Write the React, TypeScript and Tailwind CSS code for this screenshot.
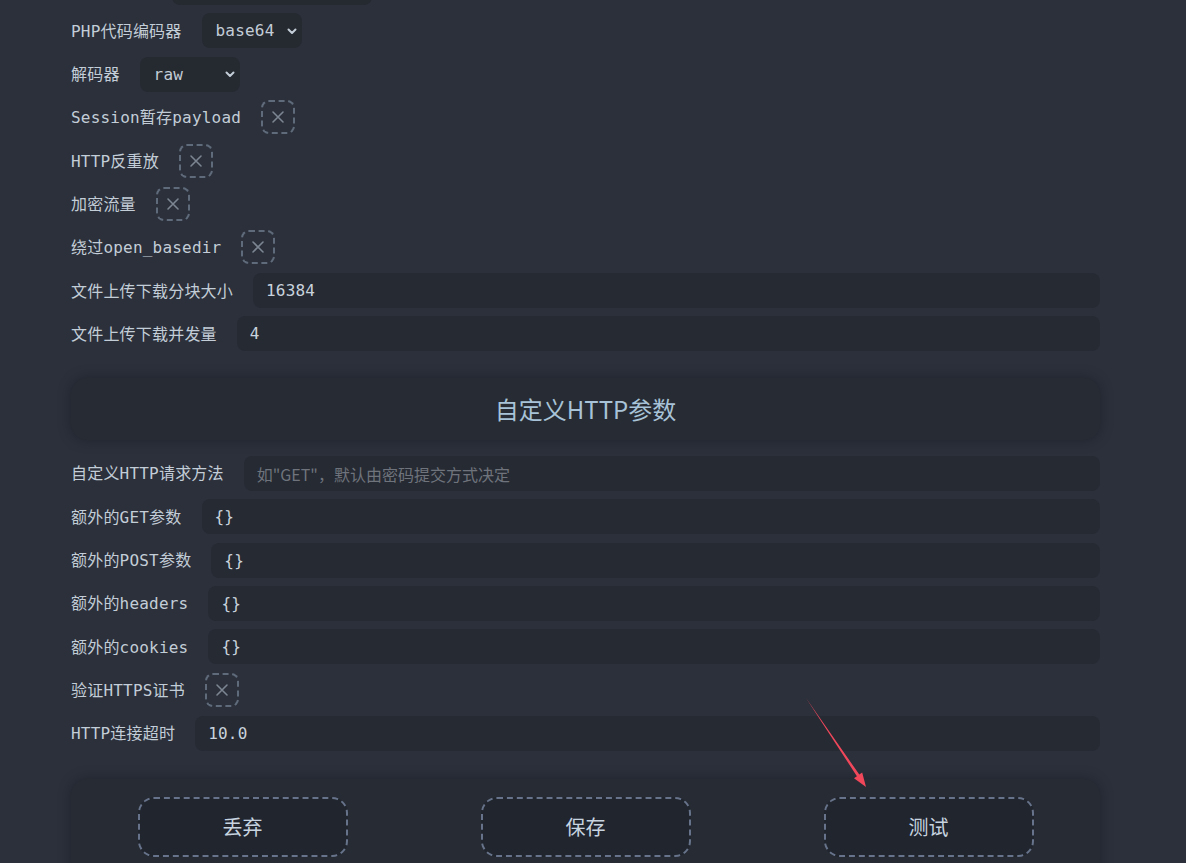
import React from "react";

const FONT = { fontFamily: '"DejaVu Sans Mono", "Noto Sans CJK SC", monospace' };

function Label({ children }: { children: React.ReactNode }) {
  return <span className="shrink-0 whitespace-nowrap pt-[2px] text-[16px] tracking-[0.2px] text-[#c3cdd7]">{children}</span>;
}

function XIcon() {
  return (
    <svg width="14" height="14" viewBox="0 0 14 14" fill="none">
      <path d="M2 2L12 12M12 2L2 12" stroke="#7c8592" strokeWidth="1.6" strokeLinecap="round" />
    </svg>
  );
}

function Chevron() {
  return (
    <svg width="10" height="7" viewBox="0 0 10 7" fill="none">
      <path d="M1.5 1.5L5 5L8.5 1.5" stroke="#c3cdd7" strokeWidth="2" strokeLinecap="round" strokeLinejoin="round" />
    </svg>
  );
}

function Row({ label, children }: { label: string; children: React.ReactNode }) {
  return (
    <div className="flex h-[35px] items-center gap-[20px]">
      <Label>{label}</Label>
      {children}
    </div>
  );
}

function Select({ value }: { value: string }) {
  return (
    <div className="flex h-[35px] w-[100px] items-center justify-between rounded-lg bg-[#252930] pl-[14px] pr-[5px] pt-[1px] text-[16px] tracking-[0.2px] text-[#c3cdd7]">
      <span>{value}</span>
      <Chevron />
    </div>
  );
}

function Check() {
  return (
    <div className="flex h-[34px] w-[34px] items-center justify-center rounded-lg border-2 border-dashed border-[#5f6a7a]">
      <XIcon />
    </div>
  );
}

function Input({ value, placeholder }: { value?: string; placeholder?: string }) {
  return (
    <div className="flex h-[35px] flex-1 items-center rounded-lg bg-[#262a33] pl-[13px] pt-[1px] text-[16px]">
      {value !== undefined ? (
        <span className="tracking-[0.2px] text-[#c9d3dd]">{value}</span>
      ) : (
        <span className="text-[#6f747c]" style={{ fontFamily: '"Noto Sans CJK SC", "DejaVu Sans Mono", sans-serif' }}>
          {placeholder}
        </span>
      )}
    </div>
  );
}

function Button({ text }: { text: string }) {
  return (
    <div className="flex justify-center">
      <div
        className="flex h-[60px] w-[210px] items-center justify-center rounded-2xl border-2 border-dashed border-[#66738a] bg-[#21252d] text-[20px] text-[#c7d4e0]"
        style={{ fontFamily: '"Noto Sans CJK SC", sans-serif' }}
      >
        {text}
      </div>
    </div>
  );
}

export default function App() {
  return (
    <div className="relative h-[863px] overflow-hidden bg-[#2b303b]" style={FONT}>
      <div className="pl-[71px] pr-[86px]">
        <div className="flex flex-col gap-[8.3px]">
          <div className="-mt-[30px] flex h-[35px] items-center">
            <div className="w-[101px]" />
            <div className="h-[35px] w-[200px] rounded-lg bg-[#252930]" />
          </div>
          <Row label="PHP代码编码器">
            <Select value="base64" />
          </Row>
          <Row label="解码器">
            <Select value="raw" />
          </Row>
          <Row label="Session暂存payload">
            <Check />
          </Row>
          <Row label="HTTP反重放">
            <Check />
          </Row>
          <Row label="加密流量">
            <Check />
          </Row>
          <Row label="绕过open_basedir">
            <Check />
          </Row>
          <Row label="文件上传下载分块大小">
            <Input value="16384" />
          </Row>
          <Row label="文件上传下载并发量">
            <Input value="4" />
          </Row>
        </div>

        <div className="mt-[26.6px] flex h-[62px] items-center justify-center rounded-2xl bg-[#272b34] shadow-[0_0_14px_rgba(0,0,0,0.28)]">
          <span className="text-[24px] text-[#a8c3d7]" style={{ fontFamily: '"Noto Sans CJK SC", sans-serif' }}>
            自定义HTTP参数
          </span>
        </div>

        <div className="mt-[16px] flex flex-col gap-[8.3px]">
          <Row label="自定义HTTP请求方法">
            <Input placeholder={'如"GET"，默认由密码提交方式决定'} />
          </Row>
          <Row label="额外的GET参数">
            <Input value="{}" />
          </Row>
          <Row label="额外的POST参数">
            <Input value="{}" />
          </Row>
          <Row label="额外的headers">
            <Input value="{}" />
          </Row>
          <Row label="额外的cookies">
            <Input value="{}" />
          </Row>
          <Row label="验证HTTPS证书">
            <Check />
          </Row>
          <Row label="HTTP连接超时">
            <Input value="10.0" />
          </Row>
        </div>

        <div className="mt-[28px] grid grid-cols-3 rounded-2xl bg-[#272b34] pb-[24px] pt-[18px] shadow-[0_0_14px_rgba(0,0,0,0.28)]">
          <Button text="丢弃" />
          <Button text="保存" />
          <Button text="测试" />
        </div>
      </div>

      <svg className="pointer-events-none absolute inset-0 h-full w-full" viewBox="0 0 1186 863">
        <polygon
          points="806,698 859.3,774.6 862.2,772.6 866,787 854,778.2 856.9,776.2"
          fill="#f0475b"
        />
      </svg>
    </div>
  );
}
